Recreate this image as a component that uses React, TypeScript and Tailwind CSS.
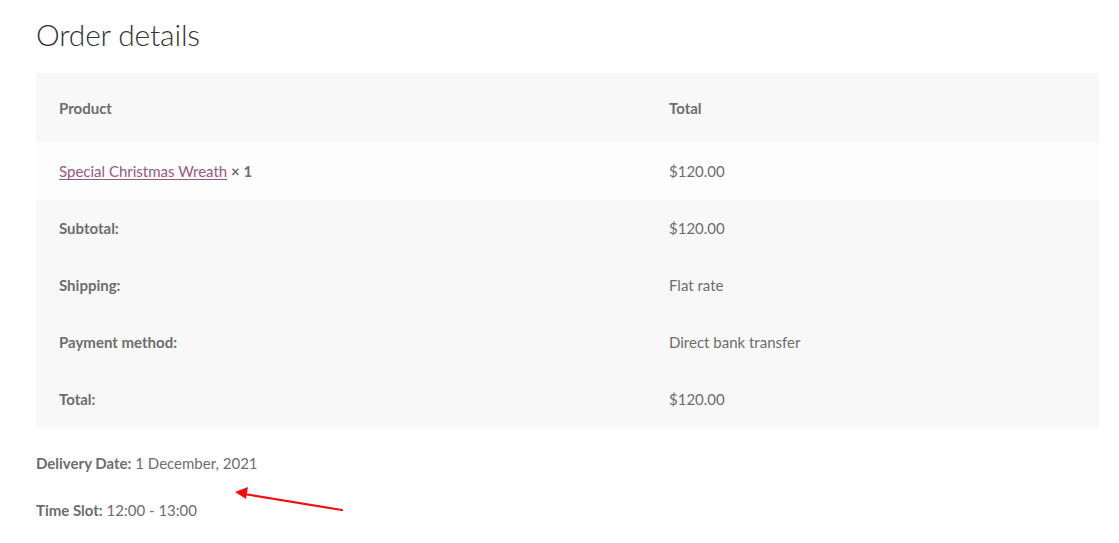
import React from 'react';

const font = { fontFamily: 'Lato, "Noto Sans", sans-serif' };

const footRows = [
  { label: 'Subtotal:', value: '$120.00' },
  { label: 'Shipping:', value: 'Flat rate' },
  { label: 'Payment method:', value: 'Direct bank transfer' },
  { label: 'Total:', value: '$120.00' },
];

export default function App() {
  return (
    <div className="min-h-[543px] bg-white text-[#6d6d6d] pl-9 pr-5 pt-[15px]" style={font}>
      <h2 className="text-[30px] font-light leading-[38px] text-[#333333] tracking-[-0.2px]">Order details</h2>

      <div className="mt-[20px] w-[1063px] text-[15px]">
        <div className="grid grid-cols-[610px_1fr] h-[70px] items-center bg-[#f8f8f8] font-bold">
          <div className="pl-[23px]">Product</div>
          <div className="pl-[23px]">Total</div>
        </div>

        <div className="grid grid-cols-[610px_1fr] h-[57px] items-center bg-[#fdfdfd]">
          <div className="pl-[23px]">
            <a href="#" className="text-[#96588a] underline underline-offset-2">
              Special Christmas Wreath
            </a>{' '}
            <strong className="font-bold">× 1</strong>
          </div>
          <div className="pl-[23px]">$120.00</div>
        </div>

        <div className="bg-[#f8f8f8]">
          {footRows.map((row) => (
            <div key={row.label} className="grid grid-cols-[610px_1fr] h-[57px] items-center">
              <div className="pl-[23px] font-bold">{row.label}</div>
              <div className="pl-[23px]">{row.value}</div>
            </div>
          ))}
        </div>
      </div>

      <div className="relative mt-[24px] text-[15px]">
        <p className="leading-[22px]">
          <strong className="font-bold">Delivery Date:</strong> 1 December, 2021
        </p>
        <p className="mt-[25px] leading-[22px]">
          <strong className="font-bold">Time Slot:</strong> 12:00 - 13:00
        </p>

        {/* annotation arrow */}
        <svg
          className="absolute left-[196px] top-[28px]"
          width="116"
          height="36"
          viewBox="0 0 116 36"
          fill="none"
        >
          <line x1="110" y1="30" x2="12" y2="14" stroke="#f20d0d" strokeWidth="2.2" strokeLinecap="round" />
          <polygon points="3,12 16,7 14,19" fill="#f20d0d" />
        </svg>
      </div>
    </div>
  );
}
